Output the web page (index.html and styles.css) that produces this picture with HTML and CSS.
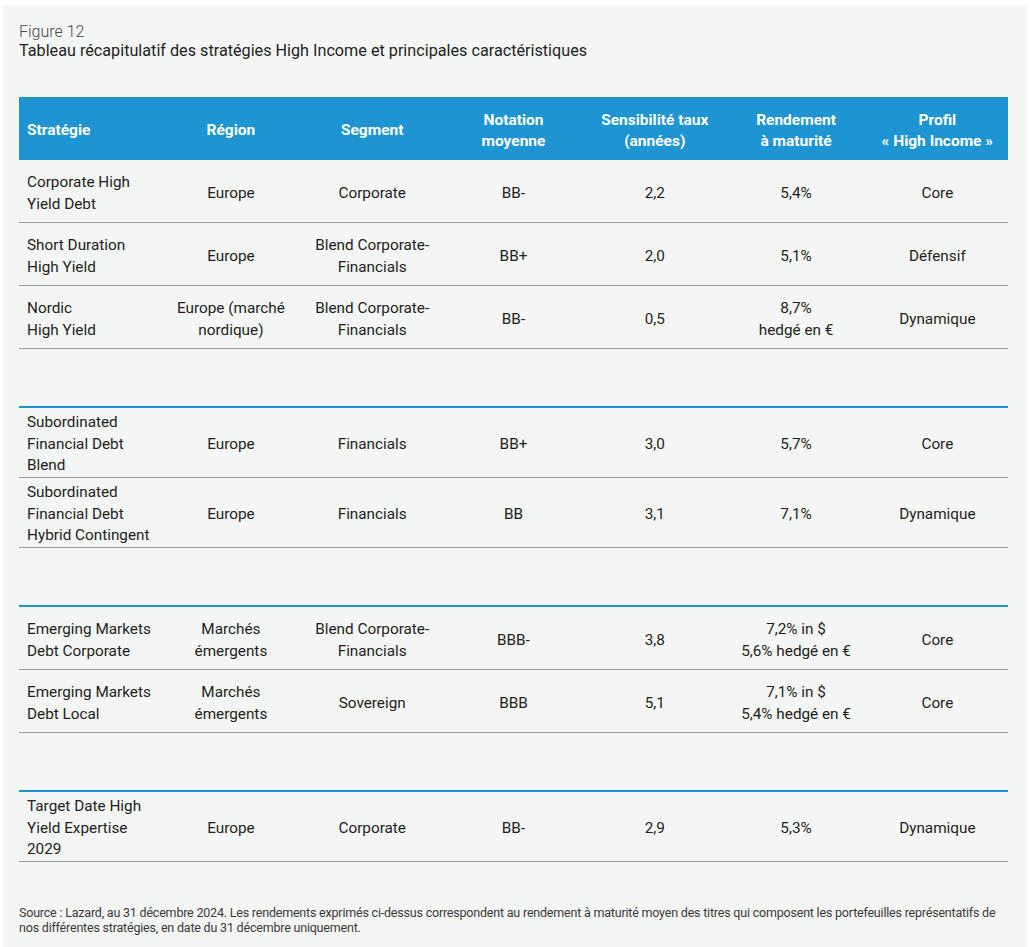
FILE: index.html
```html
<!DOCTYPE html>
<html lang="fr">
<head>
<meta charset="utf-8">
<title>Figure 12</title>
<link rel="stylesheet" href="styles.css">
</head>
<body>
<div class="panel">
  <div class="fig-label">Figure 12</div>
  <div class="fig-title">Tableau récapitulatif des stratégies High Income et principales caractéristiques</div>
  <table class="strat">
    <thead>
      <tr>
        <th class="left">Stratégie</th>
        <th>Région</th>
        <th>Segment</th>
        <th>Notation<br>moyenne</th>
        <th>Sensibilité taux<br>(années)</th>
        <th>Rendement<br>à maturité</th>
        <th>Profil<br>« High Income »</th>
      </tr>
    </thead>
    <tbody>
      <tr>
        <td class="left">Corporate High<br>Yield Debt</td>
        <td>Europe</td>
        <td>Corporate</td>
        <td>BB-</td>
        <td>2,2</td>
        <td>5,4%</td>
        <td>Core</td>
      </tr>
      <tr>
        <td class="left">Short Duration<br>High Yield</td>
        <td>Europe</td>
        <td>Blend Corporate-<br>Financials</td>
        <td>BB+</td>
        <td>2,0</td>
        <td>5,1%</td>
        <td>Défensif</td>
      </tr>
      <tr>
        <td class="left">Nordic<br>High Yield</td>
        <td>Europe (marché<br>nordique)</td>
        <td>Blend Corporate-<br>Financials</td>
        <td>BB-</td>
        <td>0,5</td>
        <td>8,7%<br>hedgé en €</td>
        <td>Dynamique</td>
      </tr>
      <tr class="spacer"><td colspan="7"></td></tr>
      <tr class="group-start tall">
        <td class="left">Subordinated<br>Financial Debt<br>Blend</td>
        <td>Europe</td>
        <td>Financials</td>
        <td>BB+</td>
        <td>3,0</td>
        <td>5,7%</td>
        <td>Core</td>
      </tr>
      <tr class="tall">
        <td class="left">Subordinated<br>Financial Debt<br>Hybrid Contingent</td>
        <td>Europe</td>
        <td>Financials</td>
        <td>BB</td>
        <td>3,1</td>
        <td>7,1%</td>
        <td>Dynamique</td>
      </tr>
      <tr class="spacer"><td colspan="7"></td></tr>
      <tr class="group-start">
        <td class="left">Emerging Markets<br>Debt Corporate</td>
        <td>Marchés<br>émergents</td>
        <td>Blend Corporate-<br>Financials</td>
        <td>BBB-</td>
        <td>3,8</td>
        <td>7,2% in $<br>5,6% hedgé en €</td>
        <td>Core</td>
      </tr>
      <tr>
        <td class="left">Emerging Markets<br>Debt Local</td>
        <td>Marchés<br>émergents</td>
        <td>Sovereign</td>
        <td>BBB</td>
        <td>5,1</td>
        <td>7,1% in $<br>5,4% hedgé en €</td>
        <td>Core</td>
      </tr>
      <tr class="spacer"><td colspan="7"></td></tr>
      <tr class="group-start tall">
        <td class="left">Target Date High<br>Yield Expertise<br>2029</td>
        <td>Europe</td>
        <td>Corporate</td>
        <td>BB-</td>
        <td>2,9</td>
        <td>5,3%</td>
        <td>Dynamique</td>
      </tr>
    </tbody>
  </table>
  <p class="source">Source : Lazard, au 31 décembre 2024. Les rendements exprimés ci-dessus correspondent au rendement à maturité moyen des titres qui composent les portefeuilles représentatifs de nos différentes stratégies, en date du 31 décembre uniquement.</p>
</div>
</body>
</html>
```
FILE: styles.css
```css
html, body {
  margin: 0;
  padding: 0;
  background: #ffffff;
}

body {
  font-family: Roboto, "Liberation Sans", sans-serif;
  color: #231f20;
}

.panel {
  margin: 6px 9px 0 3px;
  min-height: calc(100vh - 6px);
  box-sizing: border-box;
  background: #f4f5f5;
  padding: 15.5px 19px 0 16px;
}

.fig-label {
  font-size: 16px;
  font-weight: 300;
  line-height: 19px;
  color: #4a4a4a;
}

.fig-title {
  font-size: 16.2px;
  line-height: 19px;
  color: #231f20;
}

.strat {
  margin-top: 37.5px;
  width: 989px;
  border-collapse: collapse;
  table-layout: fixed;
  font-size: 15.3px;
  line-height: 21.5px;
}

.strat th {
  background: #1e94d2;
  color: #ffffff;
  font-weight: 700;
  font-size: 15.5px;
  height: 59px;
  padding: 4px 4px 0;
  text-align: center;
  vertical-align: middle;
  line-height: 21px;
}

.strat td {
  height: 57px;
  padding: 5px 4px 0;
  text-align: center;
  vertical-align: middle;
  border-bottom: 1.5px solid #9d9d9d;
}

.strat .left {
  text-align: left;
  padding-left: 8px;
}

.strat tr.tall td {
  height: 65px;
  padding-top: 4px;
  padding-bottom: 0;
}

.strat tr.group-start td {
  border-top: 2px solid #1e94d2;
}

.strat tr.spacer td {
  height: 57px;
  border-bottom: none;
  padding: 0;
}

.source {
  margin: 43px 0 0 0;
  padding-bottom: 20px;
  font-size: 12.5px;
  line-height: 15px;
  letter-spacing: -0.2px;
  color: #3a3a3a;
}
```
